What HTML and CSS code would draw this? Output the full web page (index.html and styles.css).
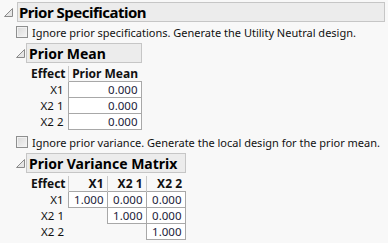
FILE: index.html
```html
<!DOCTYPE html>
<html lang="en">
<head>
    <meta charset="UTF-8">
    <title>Prior Specification</title>
    <link rel="stylesheet" href="styles.css">
</head>
<body>
    <div class="outline top">
        <div class="outline-head">
            <svg class="tri" width="9" height="9" viewBox="0 0 9 9"><polygon points="8.5,0.5 8.5,8.5 0.5,8.5" /></svg>
            <div class="title big">Prior Specification</div>
        </div>
        <div class="outline-body">
            <label class="check"><span class="box"></span>Ignore prior specifications. Generate the Utility Neutral design.</label>

            <div class="outline sub">
                <div class="outline-head">
                    <svg class="tri" width="9" height="9" viewBox="0 0 9 9"><polygon points="8.5,0.5 8.5,8.5 0.5,8.5" /></svg>
                    <div class="title">Prior Mean</div>
                </div>
                <table class="report mean">
                    <colgroup><col class="c-lab"><col class="c-wide"></colgroup>
                    <tr><th class="lab">Effect</th><th>Prior Mean</th></tr>
                    <tr><td class="lab">X1</td><td class="num">0.000</td></tr>
                    <tr><td class="lab">X2 1</td><td class="num">0.000</td></tr>
                    <tr><td class="lab">X2 2</td><td class="num">0.000</td></tr>
                </table>
            </div>

            <label class="check second"><span class="box"></span>Ignore prior variance. Generate the local design for the prior mean.</label>

            <div class="outline sub">
                <div class="outline-head">
                    <svg class="tri" width="9" height="9" viewBox="0 0 9 9"><polygon points="8.5,0.5 8.5,8.5 0.5,8.5" /></svg>
                    <div class="title">Prior Variance Matrix</div>
                </div>
                <table class="report matrix">
                    <colgroup><col class="c-lab"><col class="c-num"><col class="c-num"><col class="c-num"></colgroup>
                    <tr><th class="lab">Effect</th><th>X1</th><th>X2 1</th><th>X2 2</th></tr>
                    <tr><td class="lab">X1</td><td class="num">1.000</td><td class="num">0.000</td><td class="num">0.000</td></tr>
                    <tr><td class="lab">X2 1</td><td></td><td class="num">1.000</td><td class="num">0.000</td></tr>
                    <tr><td class="lab">X2 2</td><td></td><td></td><td class="num">1.000</td></tr>
                </table>
            </div>
        </div>
    </div>
</body>
</html>
```

FILE: styles.css
```css
body{
    margin: 0;
    padding: 2px 0 0 4px;
    background-color: #f8f8f8;
    font-family: "Noto Sans", "Open Sans", sans-serif;
    font-size: 11px;
    color: #111;
}
.outline-head{
    display: flex;
    align-items: flex-end;
    gap: 4px;
}
.sub{
    width: fit-content;
    padding-right: 2px;
}
.sub .outline-head{
    gap: 1px;
}
.tri{
    flex: none;
    margin-bottom: 5px;
}
.tri polygon{
    fill: #e6e6e6;
    stroke: #8a8a8a;
    stroke-width: 1;
}
.title{
    flex: 1;
    height: 18px;
    line-height: 19px;
    padding: 0 0 0 2px;
    border: 1px solid #c6c6c6;
    background-color: #ececec;
    font-weight: bold;
    font-size: 14px;
    color: #000;
    white-space: nowrap;
}
.title.big{
    font-size: 15px;
    letter-spacing: -0.5px;
    padding-left: 1px;
    margin-right: 3px;
}
.outline-body{
    padding-left: 12px;
}
.check{
    display: flex;
    align-items: center;
    gap: 4px;
    height: 14px;
    margin: 3px 0 4px 0;
    white-space: nowrap;
}
.check.second{
    margin: 5px 0 4px 0;
}
.box{
    flex: none;
    width: 10px;
    height: 10px;
    border: 1px solid #8e8f8f;
    background: linear-gradient(135deg, #d8d8d8, #f6f6f6);
    box-shadow: inset 0 0 0 1px #f2f2f2;
}
.report{
    border-collapse: collapse;
    table-layout: fixed;
    margin: 3px 0 0 15px;
}
.mean{ width: 110px; }
.matrix{ width: 154px; }
.c-lab{ width: 37px; }
.c-wide{ width: 73px; }
.c-num{ width: 39px; }
.report th, .report td{
    height: 15px;
    padding: 0 3px 0 0;
    line-height: 15px;
    text-align: right;
    white-space: nowrap;
}
.report th{
    font-weight: bold;
    font-size: 12px;
    border-left: 1px solid #c8c8c8;
}
.report th.lab{
    border-left: none;
    padding-left: 0;
    text-align: left;
}
.report td.lab{
    padding-right: 4px;
    font-size: 11.5px;
}
.report td.num{
    border: 1px solid #a8a8a8;
    background-color: #fff;
    color: #1b1b3a;
    font-size: 11.5px;
}
```
